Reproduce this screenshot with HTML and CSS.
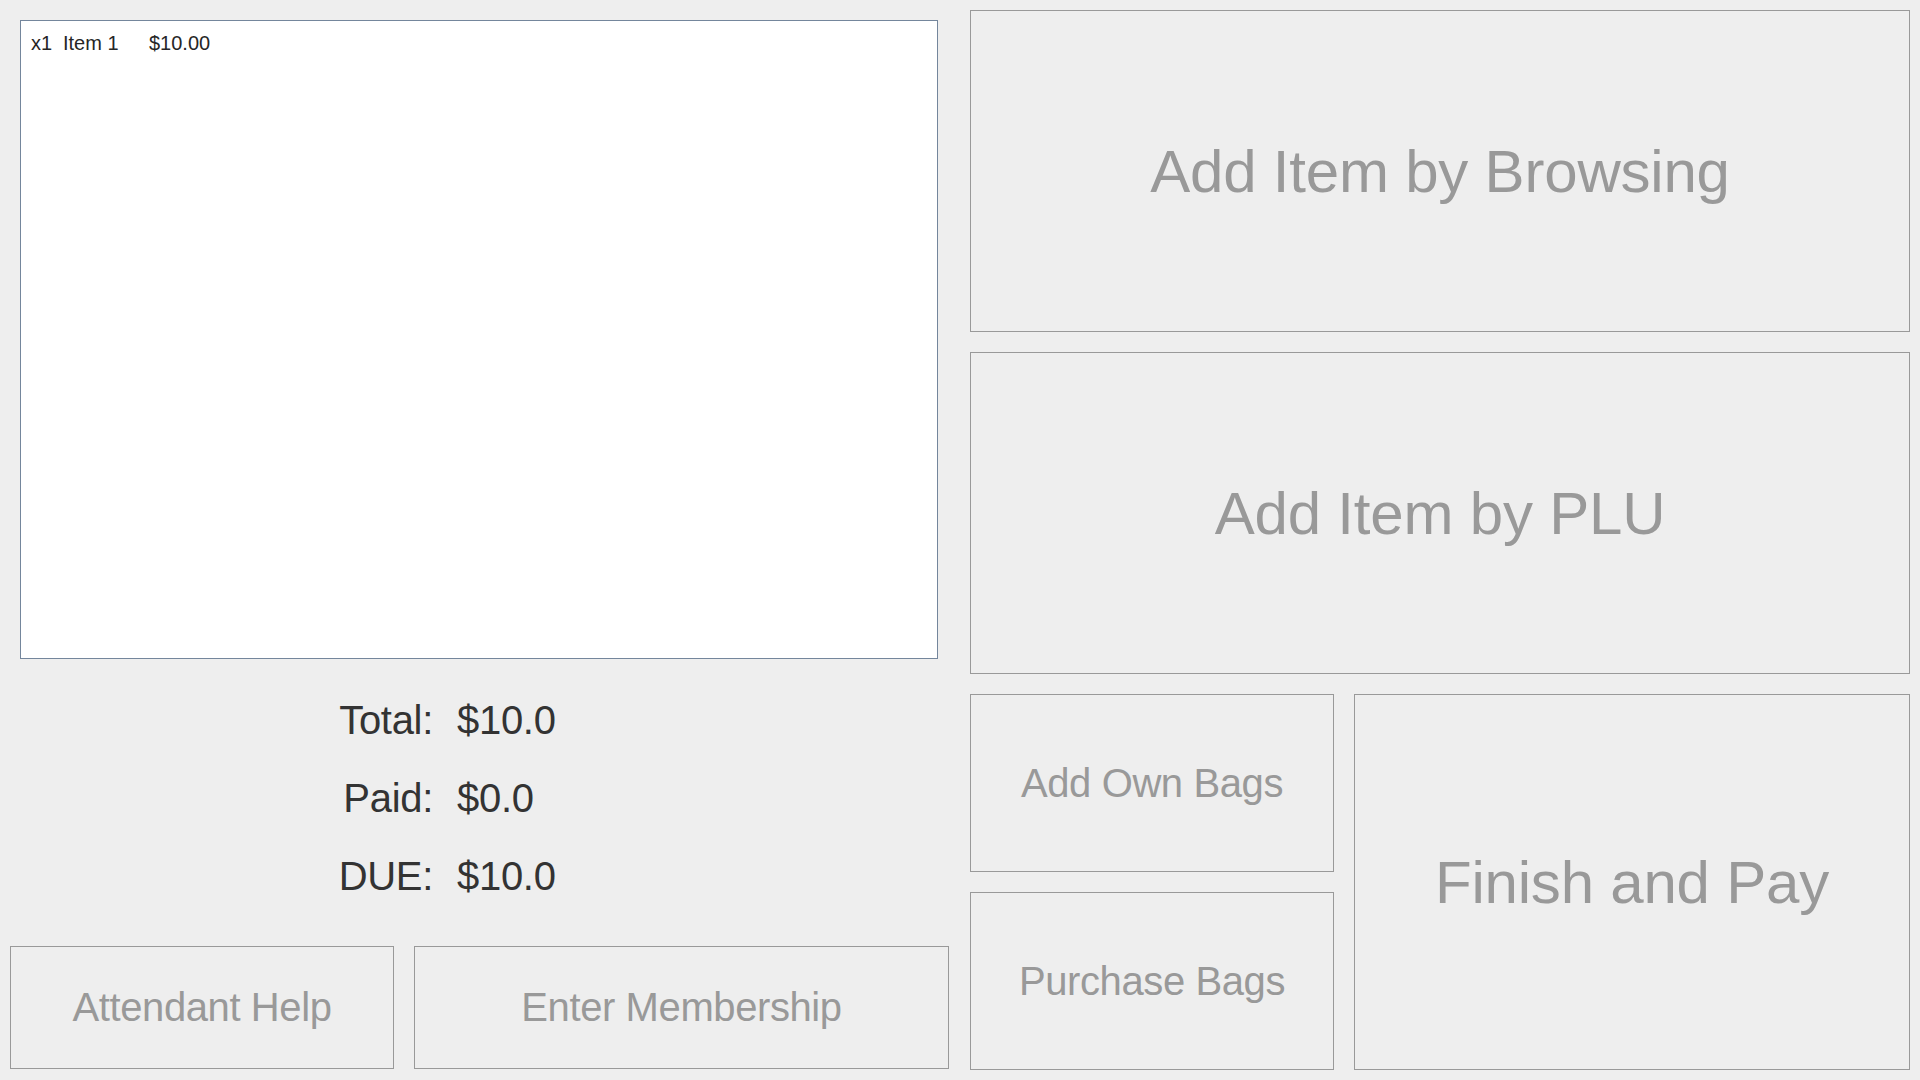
FILE: index.html
```html
<!DOCTYPE html>
<html lang="en">
<head>
<meta charset="utf-8">
<title>Self Checkout</title>
<link rel="stylesheet" href="styles.css">
</head>
<body>
<div class="app">
  <div class="left">
    <div class="cart-list">
      <div class="cart-row">
        <span class="qty">x1</span><span class="name">Item 1</span><span class="price">$10.00</span>
      </div>
    </div>
    <div class="totals">
      <div class="label">Total:</div><div class="value">$10.0</div>
      <div class="label">Paid:</div><div class="value">$0.0</div>
      <div class="label">DUE:</div><div class="value">$10.0</div>
    </div>
    <div class="left-actions">
      <button class="btn btn-small attendant">Attendant Help</button>
      <button class="btn btn-small membership">Enter Membership</button>
    </div>
  </div>
  <div class="right">
    <button class="btn btn-big row-btn">Add Item by Browsing</button>
    <button class="btn btn-big row-btn">Add Item by PLU</button>
    <div class="bottom-grid">
      <div class="bag-col">
        <button class="btn btn-small bag-btn">Add Own Bags</button>
        <button class="btn btn-small bag-btn">Purchase Bags</button>
      </div>
      <button class="btn btn-big finish">Finish and Pay</button>
    </div>
  </div>
</div>
</body>
</html>
```
FILE: styles.css
```css
html, body {
  margin: 0;
  padding: 0;
  background: #eeeeee;
}
body {
  font-family: "Liberation Sans", Arial, sans-serif;
  overflow: hidden;
}
.app {
  display: flex;
  width: 1920px;
  height: 1080px;
}
.left {
  width: 960px;
  display: flex;
  flex-direction: column;
}
.cart-list {
  margin: 20px 22px 0 20px;
  height: 639px;
  box-sizing: border-box;
  border: 1px solid #74869c;
  background: #ffffff;
  padding: 11px 10px;
}
.cart-row {
  display: flex;
  font-size: 20px;
  line-height: 23px;
  color: #262626;
}
.qty { width: 32px; }
.name { width: 86px; }
.totals {
  flex: 1;
  display: grid;
  grid-template-columns: 433px auto;
  grid-auto-rows: 78px;
  align-content: start;
  padding-top: 22px;
  font-size: 40px;
  line-height: 78px;
  letter-spacing: -0.3px;
  color: #333333;
}
.label {
  text-align: right;
}
.value {
  padding-left: 24px;
}
.left-actions {
  display: flex;
  gap: 20px;
  padding: 0 11px 11px 10px;
  height: 123px;
}
.btn {
  box-sizing: border-box;
  border: 1px solid #999999;
  background: #eeeeee;
  color: #999999;
  font-family: "Liberation Sans", Arial, sans-serif;
  padding: 0;
  margin: 0;
  display: flex;
  align-items: center;
  justify-content: center;
  white-space: nowrap;
}
.btn-small {
  font-size: 40px;
  letter-spacing: -0.4px;
}
.btn-big {
  font-size: 60px;
  letter-spacing: -0.2px;
}
.attendant {
  width: 384px;
  height: 123px;
}
.membership {
  width: 535px;
  height: 123px;
}
.right {
  width: 940px;
  padding: 10px;
  display: flex;
  flex-direction: column;
  gap: 20px;
}
.row-btn {
  width: 940px;
  height: 322px;
}
.bottom-grid {
  display: flex;
  gap: 20px;
  height: 376px;
}
.bag-col {
  width: 364px;
  display: flex;
  flex-direction: column;
  gap: 20px;
}
.bag-btn {
  width: 364px;
  height: 178px;
}
.finish {
  width: 556px;
  height: 376px;
}
```
